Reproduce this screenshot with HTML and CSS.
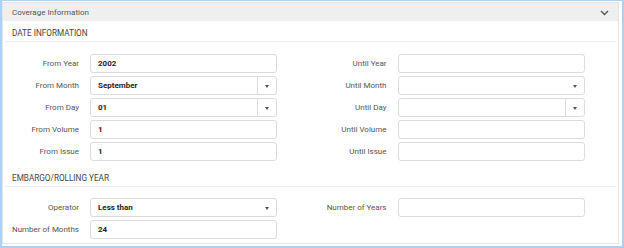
FILE: index.html
```html
<!DOCTYPE html>
<html lang="en">
<head>
    <meta charset="UTF-8">
    <meta name="viewport" content="width=device-width, initial-scale=1.0">
    <title>Coverage Information</title>
    <link rel="stylesheet" href="styles.css">
</head>
<body>
    <div class="frame">
        <div class="panel">
            <div class="panel-heading">
                <span>Coverage Information</span>
                <svg class="chevron" width="9" height="6" viewBox="0 0 9 6">
                    <path d="M1 1 L4.5 4.5 L8 1" fill="none" stroke="#555" stroke-width="1.4"/>
                </svg>
            </div>

            <!-- Date information -->
            <div class="section-title">Date Information</div>
            <div class="fields">
                <div class="form-group">
                    <label>From Year</label>
                    <div class="input">2002</div>
                </div>
                <div class="form-group">
                    <label>Until Year</label>
                    <div class="input"></div>
                </div>

                <div class="form-group">
                    <label>From Month</label>
                    <div class="input select split"><span>September</span><i class="caret"></i></div>
                </div>
                <div class="form-group">
                    <label>Until Month</label>
                    <div class="input select"><span></span><i class="caret"></i></div>
                </div>

                <div class="form-group">
                    <label>From Day</label>
                    <div class="input select split"><span>01</span><i class="caret"></i></div>
                </div>
                <div class="form-group">
                    <label>Until Day</label>
                    <div class="input select split"><span></span><i class="caret"></i></div>
                </div>

                <div class="form-group">
                    <label>From Volume</label>
                    <div class="input">1</div>
                </div>
                <div class="form-group">
                    <label>Until Volume</label>
                    <div class="input"></div>
                </div>

                <div class="form-group">
                    <label>From Issue</label>
                    <div class="input">1</div>
                </div>
                <div class="form-group">
                    <label>Until Issue</label>
                    <div class="input"></div>
                </div>
            </div>

            <!-- Embargo -->
            <div class="section-title second">Embargo/Rolling Year</div>
            <div class="fields last">
                <div class="form-group">
                    <label>Operator</label>
                    <div class="input select"><span>Less than</span><i class="caret"></i></div>
                </div>
                <div class="form-group">
                    <label>Number of Years</label>
                    <div class="input"></div>
                </div>

                <div class="form-group">
                    <label>Number of Months</label>
                    <div class="input">24</div>
                </div>
            </div>
        </div>
    </div>
</body>
</html>
```

FILE: styles.css
```css
body {
    margin: 0;
    padding: 0;
    font-family: Roboto, "Liberation Sans", sans-serif;
    background-color: white;
}

.frame {
    width: 624px;
    height: 248px;
    box-sizing: border-box;
    border: 2px solid #a9d2f6;
    border-top-width: 1px;
    padding: 1px 3px 2px 0;
}

.panel {
    height: 100%;
    box-sizing: border-box;
    border: 1px solid #e4e4e4;
}

.panel-heading {
    display: flex;
    align-items: center;
    justify-content: space-between;
    height: 18px;
    padding: 0 9px 0 9px;
    background-color: #efefef;
    color: #555;
    font-size: 8px;
}

.chevron {
    display: block;
    margin-top: 1px;
}

.section-title {
    height: 20px;
    line-height: 24px;
    margin: 0 2px;
    padding-left: 7px;
    border-bottom: 1px solid #ececec;
    color: #444;
    font-size: 8.2px;
    text-transform: uppercase;
}

.section-title.second {
    margin-top: 5px;
}

.fields {
    display: grid;
    grid-template-columns: 1fr 1fr;
    row-gap: 3px;
    padding-top: 12px;
}

.fields.last {
    padding-top: 11px;
}

.form-group {
    display: flex;
    align-items: center;
}

label {
    width: 76px;
    margin-right: 11px;
    text-align: right;
    color: #555;
    font-size: 8px;
}

.input {
    display: flex;
    align-items: center;
    width: 187px;
    height: 19px;
    box-sizing: border-box;
    padding-left: 7px;
    border: 1px solid #dcdcdc;
    border-radius: 3px;
    color: #222;
    font-size: 8px;
    font-weight: bold;
}

.select {
    padding-right: 0;
}

.select span {
    flex: 1;
}

.caret {
    width: 18px;
    height: 100%;
    position: relative;
}

.split .caret {
    border-left: 1px solid #dcdcdc;
}

.caret::after {
    content: "";
    position: absolute;
    left: 7px;
    top: 8px;
    border-left: 2.5px solid transparent;
    border-right: 2.5px solid transparent;
    border-top: 3px solid #555;
}
```
